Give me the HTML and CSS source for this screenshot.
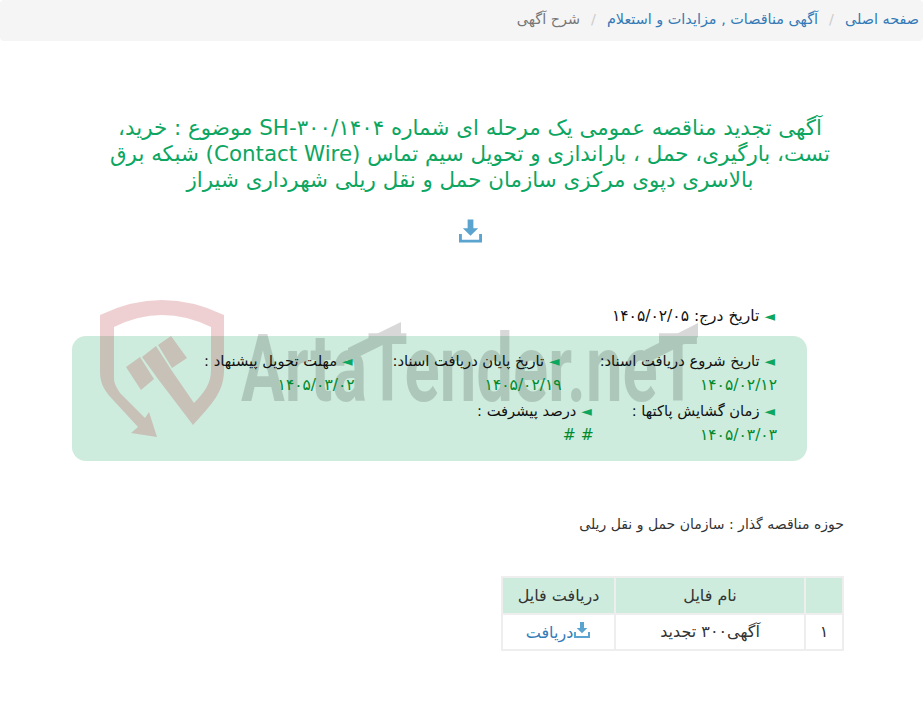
FILE: index.html
```html
<!DOCTYPE html>
<html lang="fa" dir="rtl">
<head>
  <meta charset="UTF-8">
  <title>شرح آگهی</title>
  <link rel="stylesheet" href="styles.css">
</head>
<body>
  <ol class="breadcrumb">
    <li><a href="#">صفحه اصلی</a></li>
    <li><a href="#">آگهی مناقصات , مزایدات و استعلام</a></li>
    <li class="active">شرح آگهی</li>
  </ol>

  <div class="content">
    <h3 class="title">آگهی تجدید مناقصه عمومی یک مرحله ای شماره SH-۳۰۰/۱۴۰۴ موضوع : خرید، تست، بارگیری، حمل ، باراندازی و تحویل سیم تماس (Contact Wire) شبکه برق بالاسری دپوی مرکزی سازمان حمل و نقل ریلی شهرداری شیراز</h3>

    <div class="title-icon">
      <svg width="23" height="24" viewBox="0 0 24 24"><path d="M9 0h6v9h5l-8 8-8-8h5z"/><path d="M0 15h3v6h18v-6h3v9H0z"/></svg>
    </div>

    <div class="insert-date"><span class="arrow">◄</span> تاریخ درج: ۱۴۰۵/۰۲/۰۵</div>

    <div class="dates">
      <div class="date-item">
        <div class="date-label"><span class="arrow">◄</span> تاریخ شروع دریافت اسناد:</div>
        <div class="date-value">۱۴۰۵/۰۲/۱۲</div>
      </div>
      <div class="date-item">
        <div class="date-label"><span class="arrow">◄</span> تاریخ پایان دریافت اسناد:</div>
        <div class="date-value">۱۴۰۵/۰۲/۱۹</div>
      </div>
      <div class="date-item">
        <div class="date-label"><span class="arrow">◄</span> مهلت تحویل پیشنهاد :</div>
        <div class="date-value">۱۴۰۵/۰۳/۰۲</div>
      </div>
      <div class="date-item">
        <div class="date-label"><span class="arrow">◄</span> زمان گشایش پاکتها :</div>
        <div class="date-value">۱۴۰۵/۰۳/۰۳</div>
      </div>
      <div class="date-item">
        <div class="date-label"><span class="arrow">◄</span> درصد پیشرفت :</div>
        <div class="date-value"># #</div>
      </div>
    </div>

    <p class="owner">حوزه مناقصه گذار : سازمان حمل و نقل ریلی</p>

    <table class="files">
      <tr>
        <th class="col-num"></th>
        <th class="col-name">نام فایل</th>
        <th class="col-dl">دریافت فایل</th>
      </tr>
      <tr>
        <td>۱</td>
        <td>آگهی۳۰۰ تجدید</td>
        <td><a href="#"><svg width="18" height="16" viewBox="0 0 24 24"><path d="M9 0h6v9h5l-8 8-8-8h5z"/><path d="M0 15h3v6h18v-6h3v9H0z"/></svg>دریافت</a></td>
      </tr>
    </table>
  </div>

  <!-- واترمارک -->
  <svg class="watermark" width="600" height="140" viewBox="0 0 600 140">
    <path class="wm-red" d="M0 15Q62 -15 124 15V70C124 92 112 104 93 125L58 79 42 57 56 46 72 71 94 103C104 93 111 84 111 70V27Q62 3 14 27V78C14 84 17 88 20 93L45 118 49 112 57 137 31 133 38 127 15 102C5 92 0 84 0 72ZM58 45 71 36 87 58 72 68ZM26 67 40 57 54 79 41 90Z"/>
    <g class="wm-text-group">
      <text class="wm-text" x="141" y="101" textLength="457" lengthAdjust="spacingAndGlyphs" direction="ltr">ArtaTender.neT</text>
      <path d="M248 48 301 22V36L248 62ZM545 50 598 23V37L545 64Z"/>
    </g>
  </svg>
</body>
</html>
```

FILE: styles.css
```css
body {
  font-family: "DejaVu Sans", sans-serif;
  font-size: 14px;
  line-height: 20px;
  color: #333;
  margin: 0;
  padding: 0;
  position: relative;
}

a {
  color: #337ab7;
  text-decoration: none;
}

.breadcrumb {
  list-style: none;
  margin: 0;
  padding: 9px 4px 8px 15px;
  height: 41px;
  box-sizing: border-box;
  background: #f5f5f5;
  border-radius: 4px;
  display: flex;
  font-size: 14.4px;
}

.breadcrumb li + li::before {
  content: "/";
  color: #ccc;
  padding: 0 11px;
}

.breadcrumb .active {
  color: #777;
}

.content {
  width: 748px;
  margin-right: 79px;
  padding-top: 74px;
}

.title {
  margin: 0;
  font-size: 21.4px;
  font-weight: normal;
  line-height: 26px;
  text-align: center;
  color: #0ca661;
}

.title-icon {
  margin-top: 26px;
  text-align: center;
  height: 24px;
}

.title-icon svg {
  fill: #5ba4cf;
}

.insert-date {
  margin-top: 61px;
  padding-right: 69px;
  font-size: 15.5px;
  line-height: 24px;
  color: #111;
}

.arrow {
  color: #0ca661;
  font-size: 14px;
  line-height: 1;
}

.dates {
  margin: 8px 37px 0 -24px;
  height: 125px;
  box-sizing: border-box;
  padding: 12px 30px;
  background: #cdecdd;
  border-radius: 14px;
  display: flex;
  flex-wrap: wrap;
  column-gap: 38px;
  align-content: flex-start;
}

.date-item {
  position: relative;
  z-index: 2;
}

.date-label {
  padding-right: 2px;
  color: #111;
  font-size: 14.7px;
  line-height: 25px;
}

.date-value {
  color: #008a2e;
  font-size: 15.5px;
  line-height: 25px;
}

.owner {
  margin: 53px 0 0;
  color: #333;
}

.files {
  margin-top: 42px;
  border-collapse: collapse;
  width: 343px;
}

.files th,
.files td {
  border: 2px solid #eee;
  text-align: center;
  font-weight: normal;
  padding: 0;
}

.files th {
  background: #cdecdd;
  font-size: 16px;
  height: 35px;
}

.files td {
  font-size: 16px;
  height: 34px;
}

.col-num {
  width: 36px;
}

.col-name {
  width: 188px;
}

.files svg {
  fill: #5ba4cf;
}

.watermark {
  position: absolute;
  left: 100px;
  top: 300px;
  z-index: 1;
  pointer-events: none;
}

.wm-red {
  fill: rgba(182, 41, 50, 0.22);
}

.wm-text-group {
  opacity: 0.15;
}

.wm-text {
  font-family: "Roboto", sans-serif;
  font-size: 94px;
  font-weight: 700;
}
```
